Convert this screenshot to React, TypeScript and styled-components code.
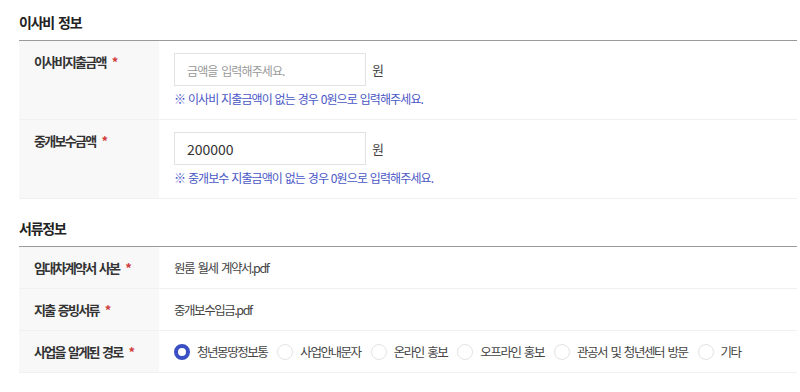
import styled, { createGlobalStyle } from 'styled-components'

const GlobalStyle = createGlobalStyle`
  body {
    margin: 0;
    background: #fff;
    font-family: 'Noto Sans CJK KR', 'Noto Sans', sans-serif;
    color: #333;
  }
`

const Page = styled.div`
  padding: 12px 3px 0 19px;
`

const SectionTitle = styled.h3`
  margin: 0;
  font-size: 14px;
  font-weight: 700;
  color: #222;
  line-height: 20px;
  padding-bottom: 8px;
  letter-spacing: -1.2px;
  word-spacing: 2px;
`

const Table = styled.div`
  border-top: 1px solid #9a9a9a;
  margin-bottom: 19px;
`

const Row = styled.div`
  display: flex;
  border-bottom: 1px solid #f0f0f0;
`

const Label = styled.div<{ $top?: boolean }>`
  width: 125px;
  flex-shrink: 0;
  background: #f8f8f8;
  padding: ${({ $top }) => ($top ? '11px 0 0 15px' : '0 0 0 15px')};
  display: flex;
  align-items: ${({ $top }) => ($top ? 'flex-start' : 'center')};
  font-size: 13px;
  font-weight: 700;
  color: #333;
  letter-spacing: -1.7px;
  word-spacing: 2px;
  white-space: pre;
`

const Star = styled.span`
  color: #d23c3c;
  margin-left: 6px;
`

const Cell = styled.div`
  flex: 1;
  padding: 0 15px;
  display: flex;
  flex-direction: column;
  justify-content: center;
  min-height: 41px;
  font-size: 12.5px;
  color: #444;
  letter-spacing: -1.45px;
  word-spacing: 2px;
`

const InputCell = styled(Cell)`
  justify-content: flex-start;
  padding-top: 12px;
  padding-bottom: 12px;
`

const InputLine = styled.div`
  display: flex;
  align-items: center;
  gap: 6px;
`

const Input = styled.input`
  width: 192px;
  height: 33px;
  box-sizing: border-box;
  border: 1px solid #e2e2e2;
  padding: 0 12px;
  font-family: inherit;
  font-size: 14px;
  color: #333;
  outline: none;
  letter-spacing: 0;
  &::placeholder {
    color: #999;
    font-size: 12px;
    letter-spacing: -0.9px;
    word-spacing: 2px;
  }
`

const Unit = styled.span`
  font-size: 13px;
  color: #444;
`

const Help = styled.p`
  margin: 4px 0 0;
  font-size: 12px;
  color: #4a57c6;
  letter-spacing: -0.9px;
  word-spacing: 1px;
`

const Radios = styled.div`
  display: flex;
  align-items: center;
`

const RadioItem = styled.label`
  display: flex;
  align-items: center;
  margin-right: 10px;
  white-space: nowrap;
`

const Dot = styled.span<{ $on?: boolean }>`
  width: 16px;
  height: 16px;
  box-sizing: border-box;
  border-radius: 50%;
  margin-right: 7px;
  flex-shrink: 0;
  border: ${({ $on }) => ($on ? '4px solid #3b4fc4' : '1px solid #e3e3e3')};
  background: #fff;
`

const options = ['청년몽땅정보통', '사업안내문자', '온라인 홍보', '오프라인 홍보', '관공서 및 청년센터 방문', '기타']

export default function App() {
  return (
    <Page>
      <GlobalStyle />
      <SectionTitle>이사비 정보</SectionTitle>
      <Table>
        <Row>
          <Label $top>이사비지출금액<Star>*</Star></Label>
          <InputCell>
            <InputLine>
              <Input placeholder="금액을 입력해주세요." />
              <Unit>원</Unit>
            </InputLine>
            <Help>※ 이사비 지출금액이 없는 경우 0원으로 입력해주세요.</Help>
          </InputCell>
        </Row>
        <Row>
          <Label $top>중개보수금액<Star>*</Star></Label>
          <InputCell>
            <InputLine>
              <Input defaultValue="200000" />
              <Unit>원</Unit>
            </InputLine>
            <Help>※ 중개보수 지출금액이 없는 경우 0원으로 입력해주세요.</Help>
          </InputCell>
        </Row>
      </Table>
      <SectionTitle>서류정보</SectionTitle>
      <Table>
        <Row>
          <Label>임대차계약서 사본<Star>*</Star></Label>
          <Cell>원룸 월세 계약서.pdf</Cell>
        </Row>
        <Row>
          <Label>지출 증빙서류<Star>*</Star></Label>
          <Cell>중개보수입금.pdf</Cell>
        </Row>
        <Row>
          <Label>사업을 알게된 경로<Star>*</Star></Label>
          <Cell>
            <Radios>
              {options.map((o, i) => (
                <RadioItem key={o}>
                  <Dot $on={i === 0} />
                  {o}
                </RadioItem>
              ))}
            </Radios>
          </Cell>
        </Row>
      </Table>
    </Page>
  )
}
